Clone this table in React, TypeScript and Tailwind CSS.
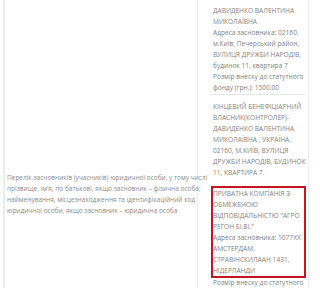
const founder = [
  "ДАВИДЕНКО ВАЛЕНТИНА",
  "МИКОЛАЇВНА",
  "Адреса засновника: 02160,",
  "м.Київ, Печерський район,",
  "ВУЛИЦЯ ДРУЖБИ НАРОДІВ,",
  "будинок 11, квартира 7",
  "Розмір внеску до статутного",
  "фонду (грн.): 1500.00",
];

const beneficiary = [
  "КІНЦЕВИЙ БЕНЕФІЦІАРНИЙ",
  "ВЛАСНИК(КОНТРОЛЕР)-",
  "ДАВИДЕНКО ВАЛЕНТИНА",
  "МИКОЛАЇВНА , УКРАЇНА,",
  "02160, М.КИЇВ, ВУЛИЦЯ",
  "ДРУЖБИ НАРОДІВ, БУДИНОК",
  "11, КВАРТИРА 7.",
];

const company = [
  "ПРИВАТНА КОМПАНІЯ З",
  "ОБМЕЖЕНОЮ",
  "ВІДПОВІДАЛЬНІСТЮ \"АГРО",
  "РЕГОН БІ.ВІ.\"",
  "Адреса засновника: 1077XX",
  "АМСТЕРДАМ,",
  "СТРАВІНСКИЛААН 1431,",
  "НІДЕРЛАНДИ",
];

const label = [
  "Перелік засновників (учасників) юридичної особи, у тому числі",
  "прізвище, ім'я, по батькові, якщо засновник – фізична особа;",
  "найменування, місцезнаходження та ідентифікаційний код",
  "юридичної особи, якщо засновник – юридична особа",
];

function Lines({ items }: { items: string[] }) {
  return (
    <>
      {items.map((t) => (
        <div key={t} className="whitespace-nowrap">
          {t}
        </div>
      ))}
    </>
  );
}

export default function App() {
  return (
    <div className="w-[320px] h-[288px] overflow-hidden bg-white font-['Open_Sans',sans-serif] text-[6.6px] leading-[11px] text-[#828282]">
      <div className="flex ml-[3px] w-[306px] border-l-2 border-r border-[#ececec]">
        {/* label cell */}
        <div className="w-[193px] border-r border-[#ececec] pl-[2px] pt-[172px] text-[6.5px] text-[#8c8c8c]">
          <Lines items={label} />
        </div>

        {/* value cell */}
        <div className="flex-1 pl-[15px] pr-[3px] pt-[5px]">
          <div className="pb-[1px] border-b border-[#e8e8e8] -ml-[2px] pl-[2px]">
            <Lines items={founder} />
          </div>
          <div className="pt-[6px]">
            <Lines items={beneficiary} />
          </div>
          <div className="mt-[8px] -ml-[2px] border-2 border-[#c8141e]">
            <Lines items={company} />
          </div>
          <div className="-mt-[1px] whitespace-nowrap">Розмір внеску до статутного</div>
        </div>
      </div>
    </div>
  );
}
